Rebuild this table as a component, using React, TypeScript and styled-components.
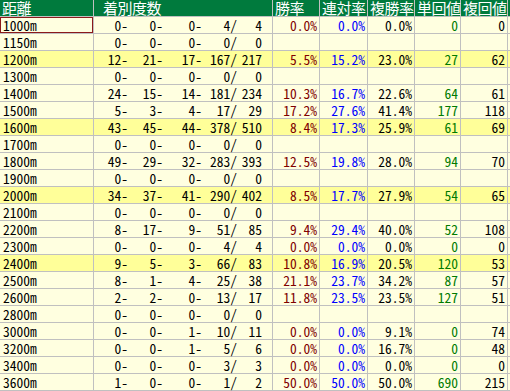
import React from 'react'
import styled, { createGlobalStyle } from 'styled-components'

const GlobalStyle = createGlobalStyle`
  html, body {
    margin: 0;
    padding: 0;
    background: #ffffff;
    overflow: hidden;
  }
`

type Row = {
  dist: string
  rec: [number, number, number, number, number]
  win?: string
  ren?: string
  fuku?: string
  tan?: number
  fukuVal?: number
  hi?: boolean
}

const rows: Row[] = [
  { dist: '1000m', rec: [0, 0, 0, 4, 4], win: '0.0%', ren: '0.0%', fuku: '0.0%', tan: 0, fukuVal: 0 },
  { dist: '1150m', rec: [0, 0, 0, 0, 0] },
  { dist: '1200m', rec: [12, 21, 17, 167, 217], win: '5.5%', ren: '15.2%', fuku: '23.0%', tan: 27, fukuVal: 62, hi: true },
  { dist: '1300m', rec: [0, 0, 0, 0, 0] },
  { dist: '1400m', rec: [24, 15, 14, 181, 234], win: '10.3%', ren: '16.7%', fuku: '22.6%', tan: 64, fukuVal: 61 },
  { dist: '1500m', rec: [5, 3, 4, 17, 29], win: '17.2%', ren: '27.6%', fuku: '41.4%', tan: 177, fukuVal: 118 },
  { dist: '1600m', rec: [43, 45, 44, 378, 510], win: '8.4%', ren: '17.3%', fuku: '25.9%', tan: 61, fukuVal: 69, hi: true },
  { dist: '1700m', rec: [0, 0, 0, 0, 0] },
  { dist: '1800m', rec: [49, 29, 32, 283, 393], win: '12.5%', ren: '19.8%', fuku: '28.0%', tan: 94, fukuVal: 70 },
  { dist: '1900m', rec: [0, 0, 0, 0, 0] },
  { dist: '2000m', rec: [34, 37, 41, 290, 402], win: '8.5%', ren: '17.7%', fuku: '27.9%', tan: 54, fukuVal: 65, hi: true },
  { dist: '2100m', rec: [0, 0, 0, 0, 0] },
  { dist: '2200m', rec: [8, 17, 9, 51, 85], win: '9.4%', ren: '29.4%', fuku: '40.0%', tan: 52, fukuVal: 108 },
  { dist: '2300m', rec: [0, 0, 0, 4, 4], win: '0.0%', ren: '0.0%', fuku: '0.0%', tan: 0, fukuVal: 0 },
  { dist: '2400m', rec: [9, 5, 3, 66, 83], win: '10.8%', ren: '16.9%', fuku: '20.5%', tan: 120, fukuVal: 53, hi: true },
  { dist: '2500m', rec: [8, 1, 4, 25, 38], win: '21.1%', ren: '23.7%', fuku: '34.2%', tan: 87, fukuVal: 57 },
  { dist: '2600m', rec: [2, 2, 0, 13, 17], win: '11.8%', ren: '23.5%', fuku: '23.5%', tan: 127, fukuVal: 51 },
  { dist: '2800m', rec: [0, 0, 0, 0, 0] },
  { dist: '3000m', rec: [0, 0, 1, 10, 11], win: '0.0%', ren: '0.0%', fuku: '9.1%', tan: 0, fukuVal: 74 },
  { dist: '3200m', rec: [0, 0, 1, 5, 6], win: '0.0%', ren: '0.0%', fuku: '16.7%', tan: 0, fukuVal: 48 },
  { dist: '3400m', rec: [0, 0, 0, 3, 3], win: '0.0%', ren: '0.0%', fuku: '0.0%', tan: 0, fukuVal: 0 },
  { dist: '3600m', rec: [1, 0, 0, 1, 2], win: '50.0%', ren: '50.0%', fuku: '50.0%', tan: 690, fukuVal: 215 },
]

const headers = ['距離', '着別度数', '勝率', '連対率', '複勝率', '単回値', '複回値', '']

// right-aligned slots inside the 着別度数 cell: 1着-2着-3着-着外/計
const slotWidths = [34, 35, 39, 35, 25]

const App: React.FC = () => {
  return (
    <>
      <GlobalStyle />
      <Table>
        {headers.map((h, i) => (
          <HeadCell key={i} wide={i === 1}>
            {h}
          </HeadCell>
        ))}
        {rows.map((r, i) => (
          <React.Fragment key={r.dist}>
            <DistCell hi={r.hi} selected={i === 0}>
              {r.dist}
            </DistCell>
            <RecordCell hi={r.hi}>
              {r.rec.map((v, j) => (
                <Slot key={j} w={slotWidths[j]}>
                  {v}
                  {j < 3 ? '-' : j === 3 ? '/' : ''}
                </Slot>
              ))}
            </RecordCell>
            <NumCell hi={r.hi} color="#800000">{r.win}</NumCell>
            <NumCell hi={r.hi} color="#0000ff">{r.ren}</NumCell>
            <NumCell hi={r.hi} color="#000000">{r.fuku}</NumCell>
            <NumCell hi={r.hi} color="#007a00">{r.tan}</NumCell>
            <NumCell hi={r.hi} color="#000000">{r.fukuVal}</NumCell>
            <NumCell hi={r.hi} color="#000000" />
          </React.Fragment>
        ))}
      </Table>
    </>
  )
}

export default App

const Table = styled.div`
  display: grid;
  grid-template-columns: 93px 178px 46px 47px 46px 45px 46px 2px;
  grid-auto-rows: 16px;
  gap: 1px;
  background: #c0c0c0;
  width: 510px;
  padding-bottom: 1px;
  font-family: 'Noto Sans Mono CJK JP', 'Noto Sans CJK JP', 'DejaVu Sans Mono', monospace;
  font-feature-settings: 'hwid' 1;
`

const HeadCell = styled.div<{ wide?: boolean }>`
  background: #007a3d;
  color: #ffffff;
  font-size: 15px;
  letter-spacing: -0.5px;
  line-height: 16px;
  padding-left: ${(p) => (p.wide ? '9px' : '2px')};
  white-space: nowrap;
  font-feature-settings: normal;
`

const Cell = styled.div<{ hi?: boolean }>`
  background: ${(p) => (p.hi ? '#ffff99' : '#ffffe0')};
  font-size: 13.5px;
  line-height: 16px;
  white-space: nowrap;
`

const DistCell = styled(Cell)<{ selected?: boolean }>`
  color: #000000;
  padding-left: 3px;
  box-shadow: ${(p) => (p.selected ? 'inset 0 0 0 1px #8b1a1a' : 'none')};
`

const RecordCell = styled(Cell)`
  display: flex;
  color: #000000;
`

const Slot = styled.span<{ w: number }>`
  display: inline-block;
  width: ${(p) => p.w}px;
  text-align: right;
  flex: none;
`

const NumCell = styled(Cell)<{ color: string }>`
  color: ${(p) => p.color};
  text-align: right;
  padding-right: 2px;
`
